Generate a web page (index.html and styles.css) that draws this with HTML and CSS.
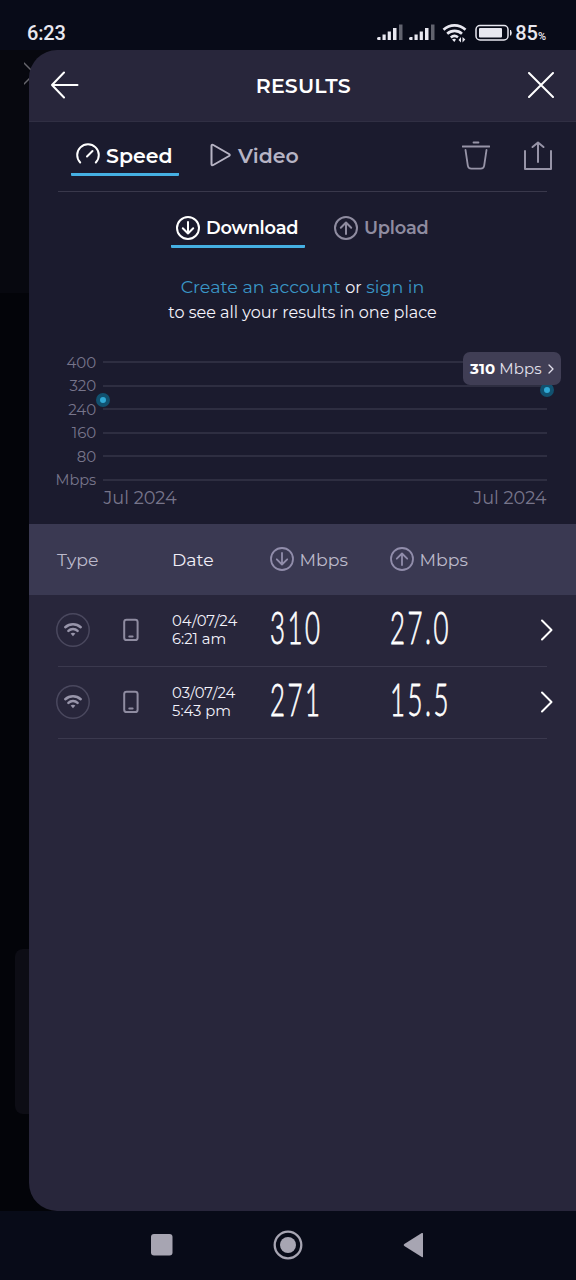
FILE: index.html
```html
<!DOCTYPE html>
<html lang="en">
<head>
<meta charset="utf-8">
<title>Results</title>
<link rel="stylesheet" href="styles.css">
</head>
<body>
<svg class="defs" width="0" height="0">
  <symbol id="down" viewBox="0 0 24 24"><circle cx="12" cy="12" r="11"/><path d="M12 6v11.5M6.8 12.3l5.2 5.2 5.2-5.2"/></symbol>
  <symbol id="up" viewBox="0 0 24 24"><circle cx="12" cy="12" r="11"/><path d="M12 18V6.5M6.8 11.7L12 6.5l5.2 5.2"/></symbol>
  <symbol id="wifi" viewBox="0 0 34 34"><circle class="ring" cx="17" cy="17" r="16.2"/><path d="M9.3 14.2a11.5 11.5 0 0 1 15.4 0M12.4 17.900a6.600 6.600 0 0 1 9.200 0"/><path class="solid" d="M14.600 20.600q2.400-1.600 4.800 0L17 23.300z"/></symbol>
  <symbol id="phone" viewBox="0 0 16 24"><rect x="1.200" y="1.700" width="13.400" height="20.400" rx="2.400"/><path d="M6.300 18.600h3.300"/></symbol>
  <symbol id="chevron" viewBox="0 0 14 22"><path d="M2 1.500l9.500 9.500L2 20.500"/></symbol>
  <symbol id="signal" viewBox="0 0 26 17"><path class="solid" d="M0 14.500q0-1.500 1.500-1.500h2v3h-2Q0 16 0 14.500zM5.500 10.500h3.200V16H5.500zM10.700 7.500h3.200V16h-3.200zM16 4h3.500v12H16z"/><path class="solid faint" d="M22 .5h3.500V16H22z"/></symbol>
</svg>
<div class="screen">
  <div class="status">
    <span class="clock">6:23</span>
    <div class="indicators">
      <svg class="signal" width="26" height="17"><use href="#signal"/></svg>
      <svg class="signal second" width="26" height="17"><use href="#signal"/></svg>
      <svg class="net" width="26" height="20" viewBox="0 0 26 20"><path d="M1.500 6.800a16 16 0 0 1 22 0M5.200 10.800a10.800 10.800 0 0 1 14.800 0M8.800 14.500a5.800 5.800 0 0 1 7.200-.3"/><path class="solid" d="M10 16.500q2.500-1.600 4 0L12.300 19zM16.500 17l2.500-3v5.500zM20.500 14v5.500l2.800-3z"/></svg>
      <svg class="battery" width="38" height="18" viewBox="0 0 38 18"><rect x="1" y="1.500" width="32" height="14.500" rx="4"/><rect class="solid" x="4" y="4" width="23" height="9.500" rx="1"/><path class="solid" d="M35 6h1q1.500 2.700 0 5.500h-1z"/></svg>
      <span class="charge">85<small>%</small></span>
    </div>
  </div>

  <div class="stage">
    <div class="under-top"><svg width="10" height="24" viewBox="0 0 10 24"><path d="M0 1l10 10M0 22l10-10"/></svg></div>
    <div class="under-card"></div>
    <main class="panel">
      <header class="bar">
        <svg class="back" width="28" height="28" viewBox="0 0 28 28"><path d="M26.500 14H1M13 1.500L1 14l12 12.500"/></svg>
        <h1>RESULTS</h1>
        <svg class="close" width="26" height="26" viewBox="0 0 26 26"><path d="M1 1l24 24M25 1L1 25"/></svg>
      </header>

      <section class="overview">
        <div class="tabs">
          <div class="tab speed active"><svg width="24" height="24" viewBox="0 0 24 24"><path d="M4.200 19.500a10.800 10.800 0 1 1 15.600 0M11 13.500L16.500 8"/></svg><span>Speed</span></div>
          <div class="tab video"><svg width="21" height="24" viewBox="0 0 21 24"><path d="M1.500 3v18q0 2 1.800 1L19 13q1.500-1 0-2L3.300 2Q1.500 1 1.500 3z"/></svg><span>Video</span></div>
          <svg class="trash" width="28" height="29" viewBox="0 0 28 29"><path d="M.5 5.500h27M11.500 1.500h5M3.500 9l2.300 15.500q.4 3.200 3.500 3.200h9.400q3.100 0 3.500-3.200L24.500 9"/></svg>
          <svg class="share" width="28" height="30" viewBox="0 0 28 30"><path d="M1 10v18h26V10M14 21V2M8.500 6L14 1.500 19.500 6"/></svg>
        </div>

        <div class="subtabs">
          <div class="tab active"><svg width="24" height="24"><use href="#down"/></svg><span>Download</span></div>
          <div class="tab"><svg width="24" height="24"><use href="#up"/></svg><span>Upload</span></div>
        </div>

        <p class="prompt"><span class="line one"><a>Create an account</a> <span class="or">or</span> <a>sign in</a></span><span class="line two">to see all your results in one place</span></p>

        <div class="chart">
          <div class="tick"><span>400</span><i></i></div>
          <div class="tick"><span>320</span><i></i></div>
          <div class="tick"><span>240</span><i></i></div>
          <div class="tick"><span>160</span><i></i></div>
          <div class="tick"><span>80</span><i></i></div>
          <div class="tick"><span>Mbps</span><i></i></div>
          <div class="months"><span>Jul 2024</span><span>Jul 2024</span></div>
          <b class="dot first"></b><b class="dot last"></b>
          <div class="tip"><span><strong>310</strong> Mbps</span><svg width="6" height="10" viewBox="0 0 6 10"><path d="M1 1l4 4-4 4"/></svg></div>
        </div>
      </section>

      <div class="row head">
        <span class="type">Type</span><span class="date">Date</span>
        <span class="unit"><svg width="24" height="24"><use href="#down"/></svg>Mbps</span>
        <span class="unit"><svg width="24" height="24"><use href="#up"/></svg>Mbps</span>
      </div>
      <div class="row">
        <svg class="wifi" width="34" height="34"><use href="#wifi"/></svg>
        <svg class="phone" width="16" height="24"><use href="#phone"/></svg>
        <span class="when">04/07/24<br>6:21 am</span>
        <span class="value"><span>310</span></span><span class="value"><span>27.0</span></span>
        <svg class="go" width="14" height="22"><use href="#chevron"/></svg>
      </div>
      <div class="row">
        <svg class="wifi" width="34" height="34"><use href="#wifi"/></svg>
        <svg class="phone" width="16" height="24"><use href="#phone"/></svg>
        <span class="when">03/07/24<br>5:43 pm</span>
        <span class="value"><span>271</span></span><span class="value"><span>15.5</span></span>
        <svg class="go" width="14" height="22"><use href="#chevron"/></svg>
      </div>
    </main>
  </div>

  <nav class="keys">
    <svg width="22" height="22" viewBox="0 0 22 22"><rect width="21.500" height="21.500" rx="3"/></svg>
    <svg width="30" height="30" viewBox="0 0 30 30"><circle class="outer" cx="15" cy="15" r="13.300"/><circle cx="15" cy="15" r="8"/></svg>
    <svg width="22" height="26" viewBox="0 0 22 26"><path d="M20 1.500v23q0 1-1.200.4L1.300 14q-1.300-1 0-2L18.800 1.100Q20 .5 20 1.500z"/></svg>
  </nav>
</div>
</body>
</html>
```
FILE: styles.css
```css
* { box-sizing: border-box; margin: 0; padding: 0; }
body { background: #080b18; color: #f3f2fb; font-family: Montserrat, Inter, sans-serif; }
svg { display: block; flex: none; fill: none; stroke: currentColor; stroke-width: 2; stroke-linecap: round; stroke-linejoin: round; }
.defs { position: absolute; }
.solid { fill: currentColor; stroke: none; }
.faint { opacity: .4; }
.screen { width: 576px; height: 1280px; display: flex; flex-direction: column; overflow: hidden; white-space: nowrap; }

.status { height: 50px; padding: 16px 30px 0 27px; display: flex; align-items: center; justify-content: space-between; font-family: Roboto, sans-serif; color: #e8e8f0; }
.clock { font-size: 20px; font-weight: 500; letter-spacing: -.2px; }
.indicators { display: flex; align-items: center; }
.signal { margin-bottom: 1px; }
.signal.second { margin-left: 6px; }
.net { margin: 0 0 1px 7px; stroke-width: 2.600; stroke-linecap: butt; }
.battery { margin: 0 0 1px 7px; stroke-width: 1.500; }
.charge { margin-left: 2px; font-size: 20px; font-weight: 500; }
.charge small { font-size: 11px; }

.stage { position: relative; height: 1161px; padding-left: 29px; background: #030409; }
.under-top { position: absolute; left: 0; top: 0; width: 60px; height: 243px; background: #07080f; color: #66666d; }
.under-top svg { margin: 12px 0 0 24px; stroke-width: 1.500; }
.under-card { position: absolute; left: 15px; top: 899px; width: 40px; height: 165px; border-radius: 8px; background: #0d0d15; }
.panel { position: relative; height: 100%; border-radius: 28px 0 0 28px; overflow: hidden; background: #28263b; }

.bar { height: 72px; padding: 0 22.500px 0 22px; display: flex; align-items: center; justify-content: space-between; border-bottom: 1px solid #302f43; color: #fff; }
.bar svg { margin-bottom: 2px; }
.bar h1 { font-size: 20.500px; font-weight: 600; letter-spacing: .2px; margin-top: -1px; }

.overview { height: 402px; background: #1b1b2e; display: flex; flex-direction: column; }
.tabs { height: 70px; margin: 0 29px; border-bottom: 1px solid #39384b; display: flex; align-items: flex-start; color: #9794a7; }
.tab { display: flex; align-items: center; gap: 6px; padding: 0 6px 0 5px; border-bottom: 3px solid transparent; font-weight: 600; }
.tab.active { color: #fff; border-color: #45b0e3; border-radius: 1px; }
.tabs .tab { height: 39px; margin-top: 15px; font-size: 20.500px; }
.speed { margin-left: 13px; width: 108px; }
.video { margin-left: 26px; gap: 7px; color: #b7b4c4; }
.trash { margin: 19px 0 0 auto; stroke-width: 1.800; }
.share { margin: 19px -5px 0 34px; }
.subtabs { display: flex; margin: 18px 0 0 142px; color: #8f8ca0; gap: 24px; }
.subtabs .tab { height: 38px; font-size: 17.800px; letter-spacing: -.2px; }
.subtabs .active { width: 134px; color: #fff; }
.prompt { margin-top: 26px; display: flex; flex-direction: column; align-items: center; font-size: 16px; }
.line { line-height: 25px; }
.one { font-size: 17.500px; }
.two { font-size: 16.050px; }
.or { font-size: 16px; }
.prompt a { color: #3a96c6; }

.chart { position: relative; margin: 25.500px 29.500px 0 21px; color: #77758b; }
.tick { height: 23.500px; display: flex; align-items: center; gap: 7px; font-size: 15px; }
.tick span { width: 46px; display: flex; justify-content: flex-end; letter-spacing: -.1px; }
.tick:nth-child(6) span { font-size: 14.600px; }
.tick i { flex: 1; height: 2px; background: #2e2e41; }
.months { display: flex; justify-content: space-between; padding-left: 53.500px; margin-top: -5px; font-size: 17.700px; line-height: 22px; }
.dot { position: absolute; width: 14px; height: 14px; border-radius: 50%; background: #31a9d5; border: 4.500px solid #11516f; }
.dot.first { left: 46px; top: 42.500px; }
.dot.last { right: -7px; top: 32px; }
.tip { position: absolute; right: -14.500px; top: 1.500px; width: 98px; height: 33px; border-radius: 7px; background: #403e55; color: #e2e0ec; display: flex; align-items: center; justify-content: space-between; padding: 0 7px; font-size: 15px; letter-spacing: .1px; }
.tip strong { color: #fff; }
.tip svg { stroke-width: 1.300; }

.row { height: 72px; margin: 0 29px; padding-bottom: 1px; border-bottom: 1px solid #3b394e; display: flex; align-items: center; }
.row.head { height: 70.500px; margin: 0; padding: 0 0 0 28px; border: 0; background: #3a3952; color: #bcb9cb; font-size: 17.300px; }
.type { width: 115px; }
.date { width: 97.500px; color: #f0eef8; }
.unit { width: 120px; display: flex; align-items: center; gap: 6px; }
.unit svg { color: #918dab; stroke-width: 1.800; }
.wifi { margin-left: -2px; color: #9895aa; stroke-width: 2.500; }
.ring { stroke: #4a485e; stroke-width: 1.500; }
.phone { margin-left: 33px; color: #8f8ca1; }
.when { margin-left: 33px; width: 98px; font-size: 14.800px; line-height: 18px; }
.value { width: 120px; height: 52px; color: #fff; font-family: Lato, Roboto, sans-serif; font-size: 44.500px; font-weight: 300; line-height: 46px; }
.value span { display: inline-block; transform: scaleX(.58); transform-origin: left; letter-spacing: 4.300px; -webkit-text-stroke: .8px #fff; }
.go { margin-left: auto; margin-right: -7px; color: #fff; }

.keys { height: 69px; padding: 0 151px 1px 151px; display: flex; align-items: center; justify-content: space-between; color: #a7a5b2; }
.keys svg { fill: currentColor; stroke: none; }
.keys .outer { fill: none; stroke: currentColor; stroke-width: 2.300; }
```
